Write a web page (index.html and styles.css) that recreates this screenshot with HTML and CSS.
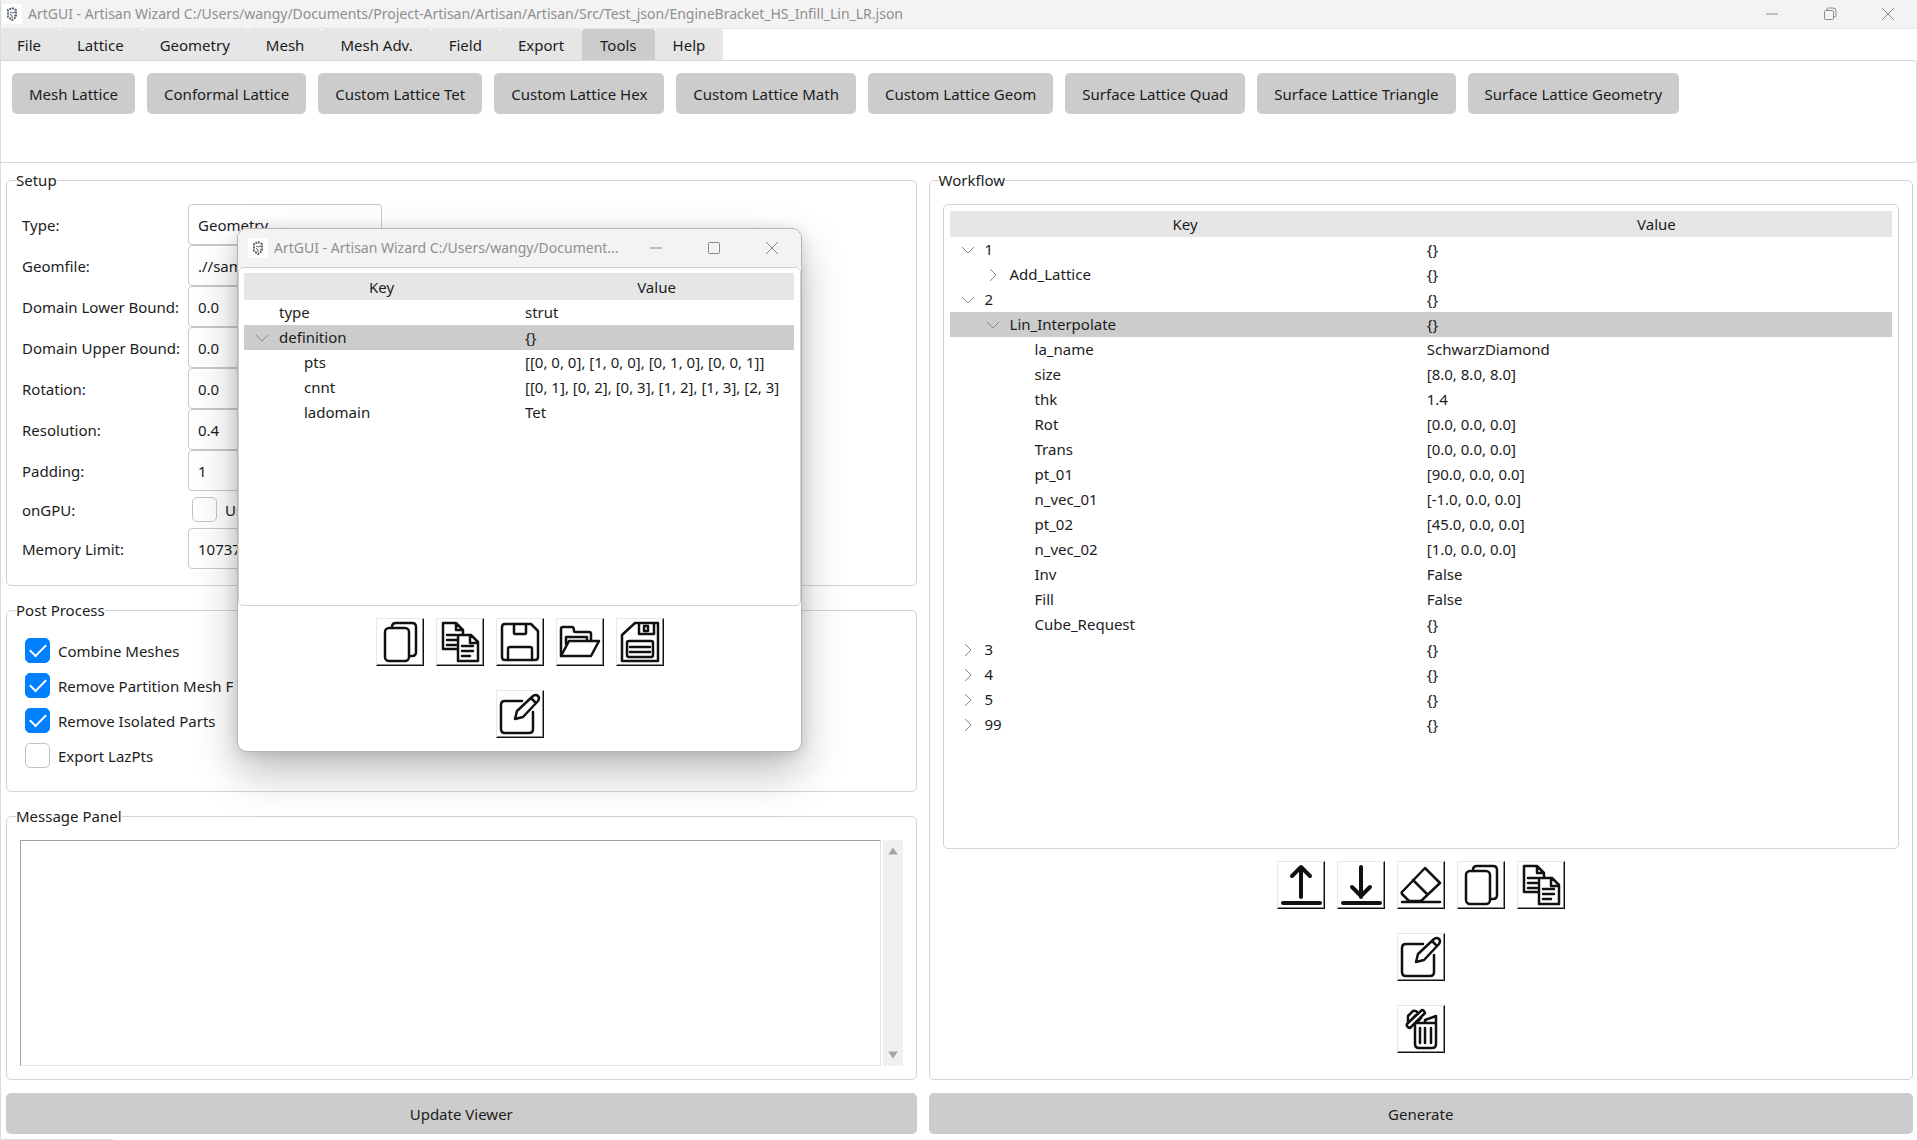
FILE: index.html
```html
<!DOCTYPE html>
<html lang="en">
<head>
<meta charset="utf-8">
<title>ArtGUI - Artisan Wizard</title>
<link rel="stylesheet" href="styles.css">
</head>
<body>

<!-- shared icons -->
<svg class="defs" aria-hidden="true">
  <symbol id="logo" viewBox="0 0 20 20">
    <rect width="20" height="20" fill="#fff"/>
    <path d="M10 4l4 2v7l-4 3-4-3V6z" fill="none" stroke="#5b6570" stroke-width="2" stroke-dasharray="2 1"/>
    <path d="M8 8l2 1 3-1M8 10l2 2v2M12 11l1 1" fill="none" stroke="#5b6570"/>
  </symbol>
  <symbol id="min" viewBox="0 0 14 14"><path d="M1 7h12"/></symbol>
  <symbol id="max" viewBox="0 0 14 14"><rect x="1.500" y="1.500" width="11" height="11" rx="1"/></symbol>
  <symbol id="restore" viewBox="0 0 14 14"><rect x="1.500" y="3.500" width="9" height="9" rx="1"/><path d="M4 3V2q0-1 1-1h5q3 0 3 3v5q0 1-2 1"/></symbol>
  <symbol id="close" viewBox="0 0 14 14"><path d="M1 1l12 12M13 1L1 13"/></symbol>
  <symbol id="down" viewBox="0 0 14 14"><path d="M1 3l6 6 6-6"/></symbol>
  <symbol id="right" viewBox="0 0 14 14"><path d="M4 0l6 6-6 6"/></symbol>
  <symbol id="copy" viewBox="0 0 46 46">
    <path d="M15 9V8q0-4 4-4h16q4 0 4 4v25q0 4-4 4h-2"/>
    <rect x="8" y="9" width="24" height="33" rx="4"/>
  </symbol>
  <symbol id="docs" viewBox="0 0 46 46">
    <path d="M20 30H6V4h13l7 7v4M19 4v7h7M10 16h9M10 21h9M10 26h9"/>
    <path d="M21 16h13l7 7v19H21zM33 16v8h8M25 27h11M25 32h11M25 37h8"/>
  </symbol>
  <symbol id="save" viewBox="0 0 46 46">
    <path d="M8 5h26l7 7v26q0 3-3 3H8q-3 0-3-3V8q0-3 3-3z"/>
    <path d="M17 5v9q0 1 1 1h10q1 0 1-1V5M11 41V30q0-2 2-2h20q2 0 2 2v11"/>
  </symbol>
  <symbol id="open" viewBox="0 0 46 46">
    <path d="M4 37V10q0-2 2-2h9q2 0 2 4 0 1 2 1h13q2 0 2 2v7"/>
    <path d="M9 25v-7h21v4M12 22h30l-8 15H4z"/>
  </symbol>
  <symbol id="saveas" viewBox="0 0 46 46">
    <path d="M18 4h23v38H5V16zM22 4v11h15V4M27 7h4v5h-4z"/>
    <path d="M12 22h22q2 0 2 2v12q0 2-2 2H12q-2 0-2-2V24q0-2 2-2zM13 28h20M13 33h20"/>
  </symbol>
  <symbol id="edit" viewBox="0 0 46 46">
    <path d="M25 10H8q-4 0-4 4v24q0 4 4 4h24q4 0 4-4V21"/>
    <path d="M18 28l2-8L36 5q3-2 5 0t0 5L26 26zM34 7l5 5"/>
  </symbol>
  <symbol id="up" viewBox="0 0 46 46"><path stroke-width="4" d="M23 35V5M14 14l9-9 9 9M5 41h37"/></symbol>
  <symbol id="dn" viewBox="0 0 46 46"><path stroke-width="4" d="M23 5v30M14 25l9 9 9-9M5 41h37"/></symbol>
  <symbol id="eraser" viewBox="0 0 46 46"><path d="M27 6l15 15-19 18H11l-7-7q-1-2 1-3zM15 18l14 14M4 40h38"/></symbol>
  <symbol id="trash" viewBox="0 0 46 46">
    <path d="M9 18L24 4q2 0 3 3L12 22q-4-1-3-4zM10 16v-6l5-5q3-1 5 2M13 14l5-5"/>
    <path d="M17 17h21v21q0 4-4 4H21q-4 0-4-4zM18 17l5-5M27 17v-3l11-4v7M22 22v15M27 22v15M33 22v15"/>
  </symbol>
</svg>

<div class="window">
  <header class="titlebar">
    <svg class="logo"><use href="#logo"/></svg>
    <h1 class="title">ArtGUI - Artisan Wizard C:/Users/wangy/Documents/Project-Artisan/Artisan/Artisan/Src/Test_json/EngineBracket_HS_Infill_Lin_LR.json</h1>
    <button class="winbtn" aria-label="Minimize"><svg><use href="#min"/></svg></button>
    <button class="winbtn" aria-label="Restore"><svg><use href="#restore"/></svg></button>
    <button class="winbtn" aria-label="Close"><svg><use href="#close"/></svg></button>
  </header>

  <nav class="tabs">
    <button class="tab">File</button>
    <button class="tab">Lattice</button>
    <button class="tab">Geometry</button>
    <button class="tab">Mesh</button>
    <button class="tab">Mesh Adv.</button>
    <button class="tab">Field</button>
    <button class="tab">Export</button>
    <button class="tab active">Tools</button>
    <button class="tab">Help</button>
  </nav>

  <div class="tools">
    <button class="btn">Mesh Lattice</button>
    <button class="btn">Conformal Lattice</button>
    <button class="btn">Custom Lattice Tet</button>
    <button class="btn">Custom Lattice Hex</button>
    <button class="btn">Custom Lattice Math</button>
    <button class="btn">Custom Lattice Geom</button>
    <button class="btn">Surface Lattice Quad</button>
    <button class="btn">Surface Lattice Triangle</button>
    <button class="btn">Surface Lattice Geometry</button>
  </div>

  <main class="main">
    <div class="col">
      <fieldset class="group">
        <legend>Setup</legend>
        <div class="form">
          <label for="type">Type:</label>
          <select class="field" id="type"><option>Geometry</option></select>
          <label for="geomfile">Geomfile:</label>
          <input class="field" id="geomfile" value=".//sample">
          <label for="lower">Domain Lower Bound:</label>
          <input class="field" id="lower" value="0.0">
          <label for="upper">Domain Upper Bound:</label>
          <input class="field" id="upper" value="0.0">
          <label for="rotation">Rotation:</label>
          <input class="field" id="rotation" value="0.0">
          <label for="resolution">Resolution:</label>
          <input class="field" id="resolution" value="0.4">
          <label for="padding">Padding:</label>
          <input class="field" id="padding" value="1">
          <span>onGPU:</span>
          <label class="check gpu"><input type="checkbox">Use</label>
          <label for="memory">Memory Limit:</label>
          <input class="field" id="memory" value="1073741824">
        </div>
      </fieldset>

      <fieldset class="group">
        <legend>Post Process</legend>
        <div class="checks">
          <label class="check"><input type="checkbox" checked>Combine Meshes</label>
          <label class="check"><input type="checkbox" checked>Remove Partition Mesh F</label>
          <label class="check"><input type="checkbox" checked>Remove Isolated Parts</label>
          <label class="check"><input type="checkbox">Export LazPts</label>
        </div>
      </fieldset>

      <fieldset class="group grow">
        <legend>Message Panel</legend>
        <div class="message">
          <textarea aria-label="Messages"></textarea>
          <div class="scroll">
            <svg viewBox="0 0 10 8"><path d="M5 1l4 6H1z"/></svg>
            <svg viewBox="0 0 10 8"><path d="M5 7l4-6H1z"/></svg>
          </div>
        </div>
      </fieldset>

      <button class="btn run">Update Viewer</button>
    </div>

    <div class="col">
      <fieldset class="group grow">
        <legend>Workflow</legend>
        <div class="workflow">
          <div class="treebox">
            <table class="tree">
              <thead><tr><th>Key</th><th>Value</th></tr></thead>
              <tbody>
                <tr><td><button class="toggle" aria-label="Collapse"><svg><use href="#down"/></svg></button>1</td><td>{}</td></tr>
                <tr><td class="l1"><button class="toggle" aria-label="Expand"><svg><use href="#right"/></svg></button>Add_Lattice</td><td>{}</td></tr>
                <tr><td><button class="toggle" aria-label="Collapse"><svg><use href="#down"/></svg></button>2</td><td>{}</td></tr>
                <tr class="selected"><td class="l1"><button class="toggle" aria-label="Collapse"><svg><use href="#down"/></svg></button>Lin_Interpolate</td><td>{}</td></tr>
                <tr><td class="leaf2">la_name</td><td>SchwarzDiamond</td></tr>
                <tr><td class="leaf2">size</td><td>[8.0, 8.0, 8.0]</td></tr>
                <tr><td class="leaf2">thk</td><td>1.4</td></tr>
                <tr><td class="leaf2">Rot</td><td>[0.0, 0.0, 0.0]</td></tr>
                <tr><td class="leaf2">Trans</td><td>[0.0, 0.0, 0.0]</td></tr>
                <tr><td class="leaf2">pt_01</td><td>[90.0, 0.0, 0.0]</td></tr>
                <tr><td class="leaf2">n_vec_01</td><td>[-1.0, 0.0, 0.0]</td></tr>
                <tr><td class="leaf2">pt_02</td><td>[45.0, 0.0, 0.0]</td></tr>
                <tr><td class="leaf2">n_vec_02</td><td>[1.0, 0.0, 0.0]</td></tr>
                <tr><td class="leaf2">Inv</td><td>False</td></tr>
                <tr><td class="leaf2">Fill</td><td>False</td></tr>
                <tr><td class="leaf2">Cube_Request</td><td>{}</td></tr>
                <tr><td><button class="toggle" aria-label="Expand"><svg><use href="#right"/></svg></button>3</td><td>{}</td></tr>
                <tr><td><button class="toggle" aria-label="Expand"><svg><use href="#right"/></svg></button>4</td><td>{}</td></tr>
                <tr><td><button class="toggle" aria-label="Expand"><svg><use href="#right"/></svg></button>5</td><td>{}</td></tr>
                <tr><td><button class="toggle" aria-label="Expand"><svg><use href="#right"/></svg></button>99</td><td>{}</td></tr>
              </tbody>
            </table>
          </div>
          <div class="actions">
            <div class="iconrow">
              <button class="icon" aria-label="Move up"><svg><use href="#up"/></svg></button>
              <button class="icon" aria-label="Move down"><svg><use href="#dn"/></svg></button>
              <button class="icon" aria-label="Erase"><svg><use href="#eraser"/></svg></button>
              <button class="icon" aria-label="Copy"><svg><use href="#copy"/></svg></button>
              <button class="icon" aria-label="Paste"><svg><use href="#docs"/></svg></button>
            </div>
            <button class="icon" aria-label="Edit"><svg><use href="#edit"/></svg></button>
            <button class="icon" aria-label="Delete"><svg><use href="#trash"/></svg></button>
          </div>
        </div>
      </fieldset>
      <button class="btn run">Generate</button>
    </div>
  </main>
  <div class="status"></div>
</div>

<div class="dialog" role="dialog" aria-label="Artisan Wizard">
  <header class="titlebar">
    <svg class="logo"><use href="#logo"/></svg>
    <h2 class="title">ArtGUI - Artisan Wizard C:/Users/wangy/Document...</h2>
    <button class="winbtn" aria-label="Minimize"><svg><use href="#min"/></svg></button>
    <button class="winbtn" aria-label="Maximize"><svg><use href="#max"/></svg></button>
    <button class="winbtn" aria-label="Close"><svg><use href="#close"/></svg></button>
  </header>
  <div class="treebox">
    <table class="tree">
      <thead><tr><th>Key</th><th>Value</th></tr></thead>
      <tbody>
        <tr><td class="leaf0">type</td><td>strut</td></tr>
        <tr class="selected"><td><button class="toggle" aria-label="Collapse"><svg><use href="#down"/></svg></button>definition</td><td>{}</td></tr>
        <tr><td class="leaf1">pts</td><td>[[0, 0, 0], [1, 0, 0], [0, 1, 0], [0, 0, 1]]</td></tr>
        <tr><td class="leaf1">cnnt</td><td>[[0, 1], [0, 2], [0, 3], [1, 2], [1, 3], [2, 3]</td></tr>
        <tr><td class="leaf1">ladomain</td><td>Tet</td></tr>
      </tbody>
    </table>
  </div>
  <div class="actions">
    <div class="iconrow">
      <button class="icon" aria-label="Copy"><svg><use href="#copy"/></svg></button>
      <button class="icon" aria-label="Paste"><svg><use href="#docs"/></svg></button>
      <button class="icon" aria-label="Save"><svg><use href="#save"/></svg></button>
      <button class="icon" aria-label="Open"><svg><use href="#open"/></svg></button>
      <button class="icon" aria-label="Save as"><svg><use href="#saveas"/></svg></button>
    </div>
    <button class="icon" aria-label="Edit"><svg><use href="#edit"/></svg></button>
  </div>
</div>

</body>
</html>
```
FILE: styles.css
```css
* { box-sizing: border-box; }
body { margin: 0; background: #fff; color: #1c1c1c; font: 16px/22px "Noto Sans", "Open Sans", sans-serif; }
button, input, select, textarea { font: inherit; color: inherit; }
button { border: 0; padding: 0; background: none; }
.defs { display: none; }

.window { display: flex; flex-direction: column; min-height: 100vh; border-left: 1px solid #dcdcdc; }

/* title bars */
.titlebar { display: flex; align-items: center; height: 29px; padding-left: 1px; background: #f3f3f3; border-bottom: 1px solid #e5e5e5; }
.logo { width: 20px; height: 20px; flex: none; }
.title { flex: 1; margin: 0 0 0 6px; font-size: 14px; font-weight: 400; color: #8f8f8f; white-space: nowrap; overflow: hidden; }
.winbtn { width: 58px; height: 100%; display: flex; align-items: center; justify-content: center; flex: none; }
.winbtn svg { width: 14px; height: 14px; fill: none; stroke: #8a8a8a; }

/* menu tabs */
.tabs { display: flex; height: 31px; }
.tab { padding: 0 18px; background: #e6e6e6; border-radius: 3px 3px 0 0; font-size: 15px; }
.tab:first-child { padding-left: 16px; }
.tab.active { background: #ccc; }
.tools { display: flex; flex-wrap: wrap; gap: 12px; align-items: flex-start; min-height: 103px; padding: 12px 11px; border: 1px solid #d9d9d9; border-left: 0; border-radius: 0 4px 4px 0; }
.btn { height: 41px; padding: 0 17px; background: #ccc; border-radius: 5px; font-size: 15px; white-space: nowrap; }

/* two columns of groups */
.main { flex: 1; display: grid; grid-template-columns: 911fr 985fr; gap: 12px; padding: 6px 4px 5px 5px; }
.col { display: flex; flex-direction: column; gap: 13px; min-width: 0; }
.group { margin: 0; padding: 0; border: 1px solid #d2d2d2; border-radius: 5px; min-width: 0; font-size: 15px; }
.group legend { margin-left: 9px; padding: 0; line-height: 22px; }
.grow { flex: 1; }
.form { display: grid; grid-template-columns: 166px 194px; align-items: center; padding: 13px 15px 16px; }
.field { width: 100%; height: 41px; padding: 0 9px; border: 1px solid #c8c8c8; border-radius: 4px; background: #fff; appearance: none; }
.check { display: flex; align-items: center; gap: 8px; height: 35px; }
.check input { appearance: none; flex: none; width: 25px; height: 25px; margin: 0; border: 1px solid #c4c4c4; border-radius: 5px; background: #fff; }
.check input:checked { display: grid; place-items: center; border-color: #007fff; background: #007fff; }
.check input:checked::before { content: ""; width: 14px; height: 7px; margin-bottom: 4px; border: solid #fff; border-width: 0 0 2px 2px; transform: rotate(-45deg); }
.gpu { padding-left: 4px; height: 37px; }
.checks { padding: 12px 18px 18px; }
.message { display: flex; gap: 2px; height: 100%; min-height: 226px; padding: 13px; }
.message textarea { flex: 1; resize: none; border: 1px solid #e3e3e3; border-top-color: #a0a0a0; border-left-color: #a0a0a0; background: #fff; }
.scroll { width: 20px; display: flex; flex-direction: column; align-items: center; justify-content: space-between; padding: 6px 0; background: #f0f0f0; }
.scroll svg { width: 12px; height: 10px; fill: #a3a3a3; }

/* trees */
.workflow { padding: 13px; }
.treebox { height: 645px; padding: 6px; border: 1px solid #d2d2d2; border-radius: 5px; font-size: 15px; }
.tree { width: 100%; table-layout: fixed; border-collapse: collapse; }
.tree th { height: 26px; padding: 0; background: #e6e6e6; font-weight: 400; }
.tree td { height: 25px; padding: 0 0 0 6px; white-space: nowrap; line-height: 25px; }
.tree td:first-child { padding-left: 8px; }
.tree td.l1 { padding-left: 33px; }
.tree td.leaf0 { padding-left: 35px; }
.tree td.leaf1 { padding-left: 60px; }
.tree td.leaf2 { padding-left: 85px; }
.selected { background: #ccc; }
.toggle { width: 20px; height: 14px; margin-right: 7px; vertical-align: middle; line-height: 0; }
.toggle svg { width: 14px; height: 14px; fill: none; stroke: #8a8a8a; }

/* icon buttons */
.actions { display: flex; flex-direction: column; align-items: center; gap: 24px; padding-top: 12px; }
.iconrow { display: flex; gap: 12px; }
.icon { width: 48px; height: 48px; border: 1px solid #e8e8e8; border-right-color: #111; border-bottom-color: #111; box-shadow: inset -1px -1px #8c8c8c; background: #fff; }
.icon svg { display: block; width: 46px; height: 46px; fill: none; stroke: #111; stroke-width: 2.5; stroke-linecap: round; stroke-linejoin: round; }

.status { width: 112px; height: 1px; background: #dcdcdc; }

/* floating window */
.dialog { position: absolute; left: 237px; top: 228px; width: 565px; height: 524px; background: #fff; border: 1px solid #b4b4b4; border-radius: 10px; overflow: hidden; box-shadow: 0 20px 44px rgba(0, 0, 0, .26), 0 2px 14px rgba(0, 0, 0, .12); }
.dialog .titlebar { height: 38px; padding-left: 10px; border-bottom: 0; }
.dialog .treebox { height: 339px; padding: 5px 6px 5px 5px; }
.dialog .tree th { height: 27px; }
```
